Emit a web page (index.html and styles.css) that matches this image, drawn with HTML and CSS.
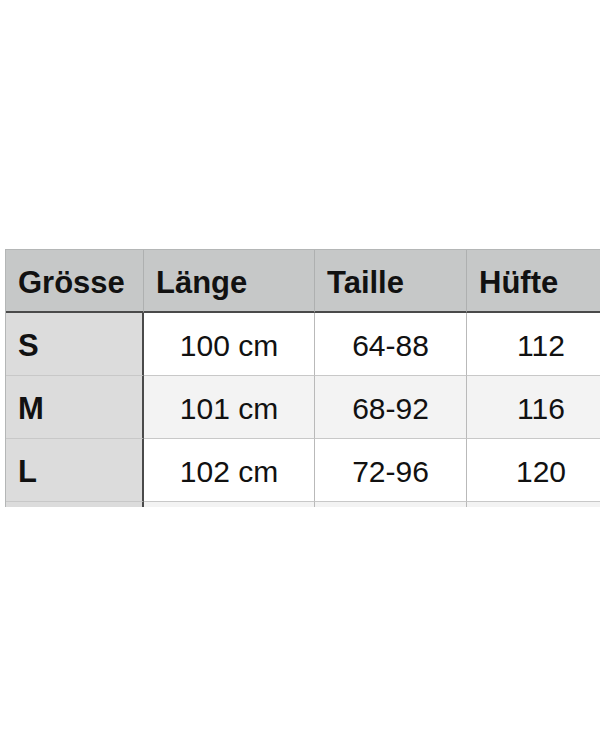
FILE: index.html
```html
<!DOCTYPE html>
<html lang="de">
<head>
<meta charset="utf-8">
<title>Grössentabelle</title>
<link rel="stylesheet" href="styles.css">
</head>
<body>
<div class="frame">
  <table class="sizes">
    <colgroup>
      <col class="c-size">
      <col class="c-len">
      <col class="c-waist">
      <col class="c-hip">
    </colgroup>
    <thead>
      <tr><th>Grösse</th><th>Länge</th><th>Taille</th><th>Hüfte</th></tr>
    </thead>
    <tbody>
      <tr><th>S</th><td>100 cm</td><td>64-88</td><td>112</td></tr>
      <tr class="alt"><th>M</th><td>101 cm</td><td>68-92</td><td>116</td></tr>
      <tr><th>L</th><td>102 cm</td><td>72-96</td><td>120</td></tr>
      <tr class="alt"><th></th><td></td><td></td><td></td></tr>
    </tbody>
  </table>
</div>
</body>
</html>
```

FILE: styles.css
```css
html, body {
  margin: 0;
  padding: 0;
  background: #ffffff;
}

body {
  font-family: "Liberation Sans", Arial, Helvetica, sans-serif;
  color: #111111;
  overflow: hidden;
}

.frame {
  margin: 249px 0 0 5px;
  width: 595px;
  height: 258px;
  overflow: hidden;
}

.sizes {
  border-collapse: separate;
  border-spacing: 0;
  table-layout: fixed;
  width: 610px;
  border-left: 1px solid #b4b6b6;
  border-top: 1px solid #b4b6b6;
}

.c-size { width: 138px; }
.c-len { width: 171px; }
.c-waist { width: 152px; }
.c-hip { width: 149px; }

.sizes th,
.sizes td {
  box-sizing: border-box;
  padding: 4px 12px 0;
  font-size: 30px;
  line-height: 34px;
  border-right: 1px solid #b9b9b9;
  border-bottom: 1px solid #c8c8c8;
  vertical-align: middle;
  white-space: nowrap;
}

.sizes thead th {
  height: 63px;
  background: #c6c8c8;
  font-size: 31px;
  font-weight: bold;
  text-align: left;
  border-bottom: 2px solid #4a4a4a;
  border-right-color: #aeb0b0;
}

.sizes tbody th,
.sizes tbody td {
  height: 63px;
}

.sizes tbody th {
  background: #dcdcdc;
  font-size: 31px;
  font-weight: bold;
  text-align: left;
}

.sizes th:first-child {
  border-right: 2px solid #4a4a4a;
}

.sizes thead th:first-child {
  border-right: 1px solid #aeb0b0;
  width: 138px;
}

.sizes tbody td {
  background: #ffffff;
  font-weight: normal;
  text-align: center;
}

.sizes tbody tr.alt td {
  background: #f3f3f3;
}
```
